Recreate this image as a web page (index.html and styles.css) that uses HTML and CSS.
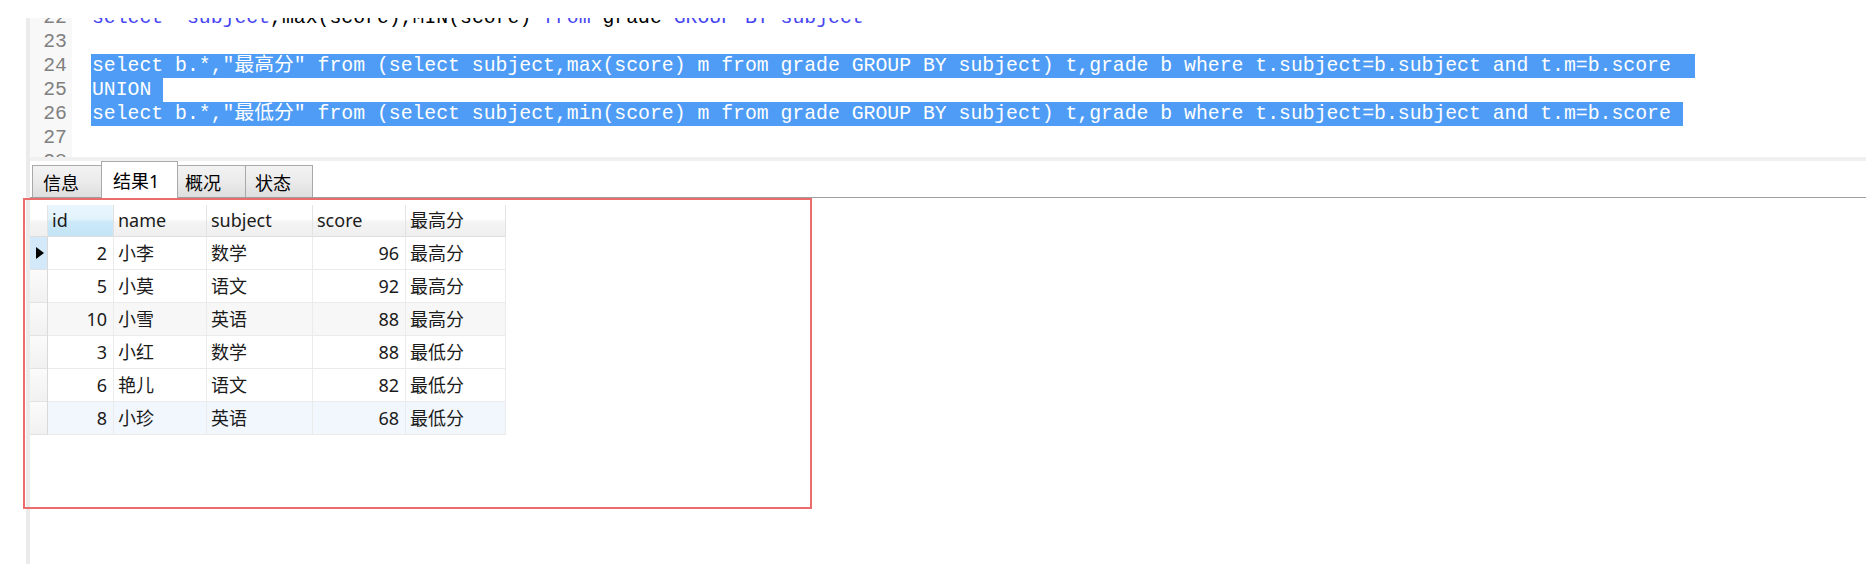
FILE: index.html
```html
<!DOCTYPE html>
<html lang="zh-CN">
<head>
<meta charset="utf-8">
<title>Navicat query result</title>
<link rel="stylesheet" href="styles.css">
</head>
<body>
<div class="page">
  <div class="frame">
    <div class="editor">
      <div class="gutter">
        <div class="nums">
          <div class="ln">22</div>
          <div class="ln">23</div>
          <div class="ln">24</div>
          <div class="ln">25</div>
          <div class="ln">26</div>
          <div class="ln">27</div>
          <div class="ln">28</div>
        </div>
      </div>
      <div class="code">
        <div class="lines">
          <div class="line"><span class="kw">select</span>  <span class="kw">subject</span>,max(score),MIN(score) <span class="kw">from</span> grade <span class="kw">GROUP BY subject</span></div>
          <div class="line"> </div>
          <div class="line"><span class="sel sel2">select b.*,"最高分" from (select subject,max(score) m from grade GROUP BY subject) t,grade b where t.subject=b.subject and t.m=b.score</span></div>
          <div class="line"><span class="sel sel1">UNION</span></div>
          <div class="line"><span class="sel sel1">select b.*,"最低分" from (select subject,min(score) m from grade GROUP BY subject) t,grade b where t.subject=b.subject and t.m=b.score</span></div>
          <div class="line"> </div>
          <div class="line"> </div>
        </div>
      </div>
    </div>
    <div class="sep"></div>
    <div class="tabs">
      <div class="tab">信息</div>
      <div class="tab active">结果1</div>
      <div class="tab t3">概况</div>
      <div class="tab t4">状态</div>
    </div>
    <div class="results">
      <div class="grid">
        <div class="h ind"></div>
        <div class="h hl">id</div>
        <div class="h">name</div>
        <div class="h">subject</div>
        <div class="h">score</div>
        <div class="h">最高分</div>

        <div class="c ind cur"><svg width="8" height="12" viewBox="0 0 8 12"><polygon points="0,0 8,6 0,12" fill="#000"/></svg></div>
        <div class="c num">2</div>
        <div class="c">小李</div>
        <div class="c">数学</div>
        <div class="c num">96</div>
        <div class="c">最高分</div>

        <div class="c ind"></div>
        <div class="c num">5</div>
        <div class="c">小莫</div>
        <div class="c">语文</div>
        <div class="c num">92</div>
        <div class="c">最高分</div>

        <div class="c ind"></div>
        <div class="c num alt">10</div>
        <div class="c alt">小雪</div>
        <div class="c alt">英语</div>
        <div class="c num alt">88</div>
        <div class="c alt">最高分</div>

        <div class="c ind"></div>
        <div class="c num">3</div>
        <div class="c">小红</div>
        <div class="c">数学</div>
        <div class="c num">88</div>
        <div class="c">最低分</div>

        <div class="c ind"></div>
        <div class="c num">6</div>
        <div class="c">艳儿</div>
        <div class="c">语文</div>
        <div class="c num">82</div>
        <div class="c">最低分</div>

        <div class="c ind"></div>
        <div class="c num hov">8</div>
        <div class="c hov">小珍</div>
        <div class="c hov">英语</div>
        <div class="c num hov">68</div>
        <div class="c hov">最低分</div>
      </div>
    </div>
  </div>
</div>
<div class="annot"></div>
</body>
</html>
```

FILE: styles.css
```css
html, body {
  margin: 0;
  padding: 0;
}

body {
  width: 1866px;
  height: 564px;
  overflow: hidden;
  background: #ffffff;
  font-family: "Noto Sans", "Noto Sans CJK SC", sans-serif;
  position: relative;
}

.page {
  display: flex;
  box-sizing: border-box;
  height: 564px;
  padding-top: 18px;
  padding-left: 26px;
}

.frame {
  flex: 1;
  display: flex;
  flex-direction: column;
  border-left: 4px solid #ebebeb;
}

/* ---------- SQL editor ---------- */
.editor {
  height: 139px;
  overflow: hidden;
  display: flex;
  font-family: "Liberation Mono", "Noto Sans CJK SC", monospace;
  font-size: 19.8px;
  line-height: 24px;
}

.gutter {
  width: 42px;
  box-sizing: border-box;
  padding-right: 5px;
  background: #f8f8f8;
  text-align: right;
  color: #808080;
}

.nums {
  margin-top: -12px;
}

.ln {
  height: 24px;
}

.code {
  flex: 1;
  padding-left: 20px;
  color: #000000;
}

.lines {
  margin-top: -12px;
}

.line {
  height: 24px;
  white-space: pre;
}

.kw {
  color: #4646f2;
}

.sel {
  display: inline-block;
  height: 24px;
  margin-left: -1px;
  padding-left: 1px;
  background: #4e9cf5;
  color: #ffffff;
}

.sel1 {
  padding-right: 1ch;
}

.sel2 {
  padding-right: 2ch;
}

.sep {
  height: 4px;
  background: #f0f0f0;
}

/* ---------- tabs ---------- */
.tabs {
  height: 36px;
  display: flex;
  align-items: flex-end;
  padding-left: 2px;
  border-bottom: 1px solid #a0a0a0;
  font-size: 18px;
  color: #000000;
}

.tab {
  box-sizing: border-box;
  width: 70px;
  height: 32px;
  padding-left: 10px;
  display: flex;
  align-items: center;
  border: 1px solid #a9a9a9;
  border-bottom: none;
  background: linear-gradient(to bottom, #f3f3f3 0%, #ebebeb 50%, #dedede 100%);
}

.tab.active {
  width: 77px;
  height: 37px;
  margin-left: -1px;
  margin-bottom: -1px;
  padding-left: 11px;
  background: #ffffff;
  position: relative;
  z-index: 1;
}

.tab.t3 {
  width: 69px;
  margin-left: -1px;
  padding-left: 7px;
}

.tab.t4 {
  width: 68px;
  margin-left: -1px;
  padding-left: 9px;
}

/* ---------- result grid ---------- */
.results {
  flex: 1;
  padding-top: 7px;
}

.grid {
  display: grid;
  grid-template-columns: 18px 66px 93px 106px 93px 100px;
  width: 476px;
  font-size: 18px;
  color: #1b1b1b;
}

.h,
.c {
  box-sizing: border-box;
  display: flex;
  align-items: center;
  padding: 0 4px;
  line-height: 1;
  white-space: nowrap;
  border-right: 1px solid #ebebeb;
  border-bottom: 1px solid #ebebeb;
}

.h {
  height: 32px;
  padding-bottom: 2px;
  background: linear-gradient(to bottom, #ffffff 0%, #ffffff 45%, #f4f4f4 55%, #efefef 100%);
  border-right-color: #e3e3e3;
  border-bottom-color: #dedede;
}

.h.hl {
  background: linear-gradient(to bottom, #e9f6fe 0%, #e2f3fc 45%, #cbe9f9 55%, #c3e4f6 100%);
}

.c {
  height: 33px;
  background: #ffffff;
}

.num {
  justify-content: flex-end;
  padding-right: 6px;
}

.alt {
  background: #f7f7f7;
}

.hov {
  background: #f2f7fd;
}

.ind {
  padding: 0;
  justify-content: center;
}

.c.ind {
  background: linear-gradient(to bottom, #fbfbfb 0%, #f1f1f1 100%);
  border-right-color: #d9d9d9;
  border-bottom-color: #e2e2e2;
}

.c.ind.cur {
  background: #d3e9f9;
  padding-left: 2px;
}

/* ---------- red annotation box ---------- */
.annot {
  position: absolute;
  left: 23px;
  top: 198px;
  width: 789px;
  height: 311px;
  box-sizing: border-box;
  border: 2px solid #ec6b6b;
}
```
